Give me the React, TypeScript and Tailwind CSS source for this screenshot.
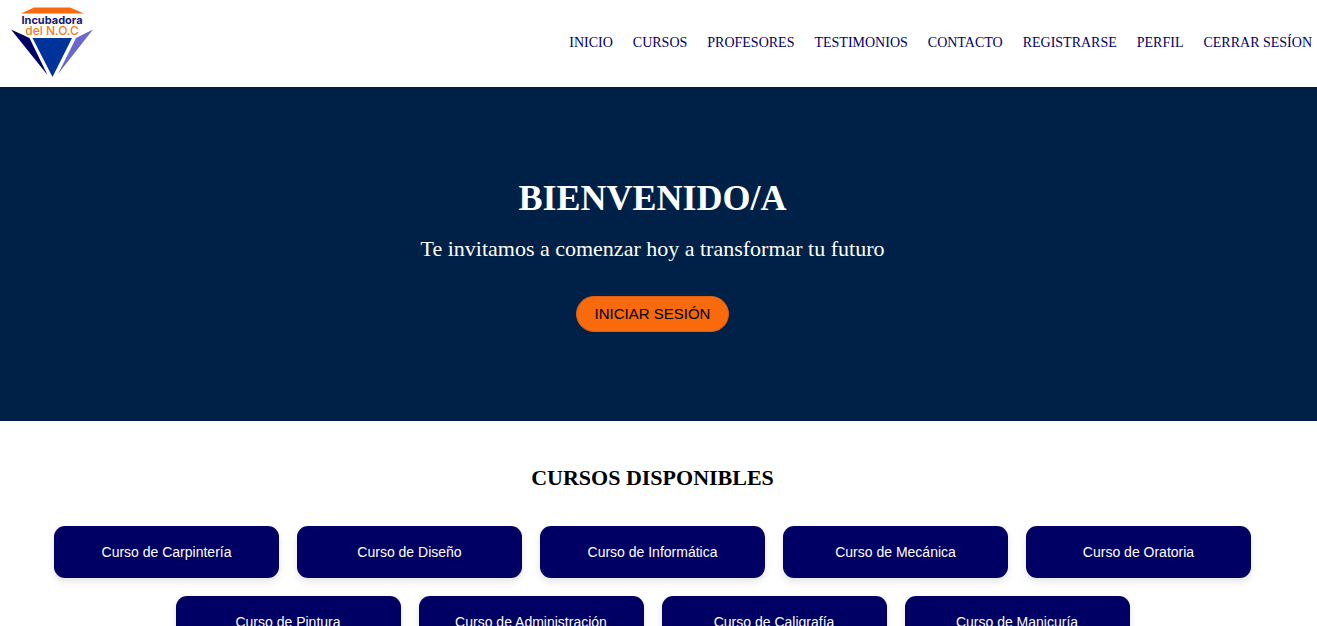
const navLinks = [
  { label: "INICIO", href: "#inicio" },
  { label: "CURSOS", href: "#cursos" },
  { label: "PROFESORES", href: "#profesores" },
  { label: "TESTIMONIOS", href: "#testimonios" },
  { label: "CONTACTO", href: "#contacto" },
  { label: "REGISTRARSE", href: "#registrarse" },
  { label: "PERFIL", href: "#perfil" },
  { label: "CERRAR SESÍON", href: "#cerrar-sesion" },
];

const courses = [
  "Carpintería",
  "Diseño",
  "Informática",
  "Mecánica",
  "Oratoria",
  "Pintura",
  "Administración",
  "Caligrafía",
  "Manicuría",
];

function Logo() {
  return (
    <svg
      viewBox="0 0 90 74"
      className="h-[74px] w-[90px]"
      role="img"
      aria-label="Incubadora del N.O.C"
    >
      <path d="M13 8.5 L26 2.5 H62 L76 8.5 Z" fill="#f96a0c" />
      <path d="M3 24.5 L21.500 33 L39.500 70 Z" fill="#000064" />
      <path d="M85 24.5 L68 33 L50 69 Z" fill="#6a67cd" />
      <path d="M24.500 33 H64 L44.500 72 Z" fill="#003399" />
      <g fontFamily="Inter, Arial, sans-serif" textAnchor="middle">
        <text x="44" y="19" fontSize="11" fontWeight="700" fill="#17176f">
          Incubadora
        </text>
        <text x="44" y="30" fontSize="12" fontWeight="500" fill="#f27a24">
          del N.O.C
        </text>
      </g>
    </svg>
  );
}

function Header() {
  return (
    <header className="flex items-center justify-between bg-white py-[5px] pr-[5px] pl-2">
      <a href="#inicio" className="pb-[3px]">
        <Logo />
      </a>
      <nav className="pb-1">
        <ul className="flex gap-5">
          {navLinks.map((link) => (
            <li key={link.href}>
              <a href={link.href} className="text-[14px] leading-4 text-[#000064]">
                {link.label}
              </a>
            </li>
          ))}
        </ul>
      </nav>
    </header>
  );
}

function Hero() {
  return (
    <section
      id="inicio"
      className="flex flex-col items-center bg-[#002147] pt-[90px] pr-3 pb-[89px] text-center text-white"
    >
      <h1 className="text-[36px] leading-[42px] font-bold">BIENVENIDO/A</h1>
      <p className="mt-[17px] text-[22px] leading-[26px]">
        Te invitamos a comenzar hoy a transformar tu futuro
      </p>
      <button
        type="button"
        className="mt-[34px] h-9 rounded-full border border-[#dd6215] bg-[#f96a0c] px-[18px] font-['Liberation_Sans',Arial,sans-serif] text-[15px] text-black"
      >
        INICIAR SESIÓN
      </button>
    </section>
  );
}

function Courses() {
  return (
    <section id="cursos" className="bg-white pt-11 pr-3 pb-9">
      <h2 className="text-center text-[22px] leading-[26px] font-bold text-black">
        CURSOS DISPONIBLES
      </h2>
      <ul className="mt-[35px] flex flex-wrap justify-center gap-[18px] px-9">
        {courses.map((course) => (
          <li key={course}>
            <a
              href="#cursos"
              className="flex h-[52px] w-[225px] items-center justify-center rounded-[11px] bg-[#000064] font-['Liberation_Sans',Arial,sans-serif] text-[14px] text-white shadow-[0_4px_7px_rgba(0,0,0,0.1)]"
            >
              Curso de {course}
            </a>
          </li>
        ))}
      </ul>
    </section>
  );
}

export default function App() {
  return (
    <div className="bg-white font-['Liberation_Serif','Times_New_Roman',serif]">
      <Header />
      <main>
        <Hero />
        <Courses />
      </main>
    </div>
  );
}
